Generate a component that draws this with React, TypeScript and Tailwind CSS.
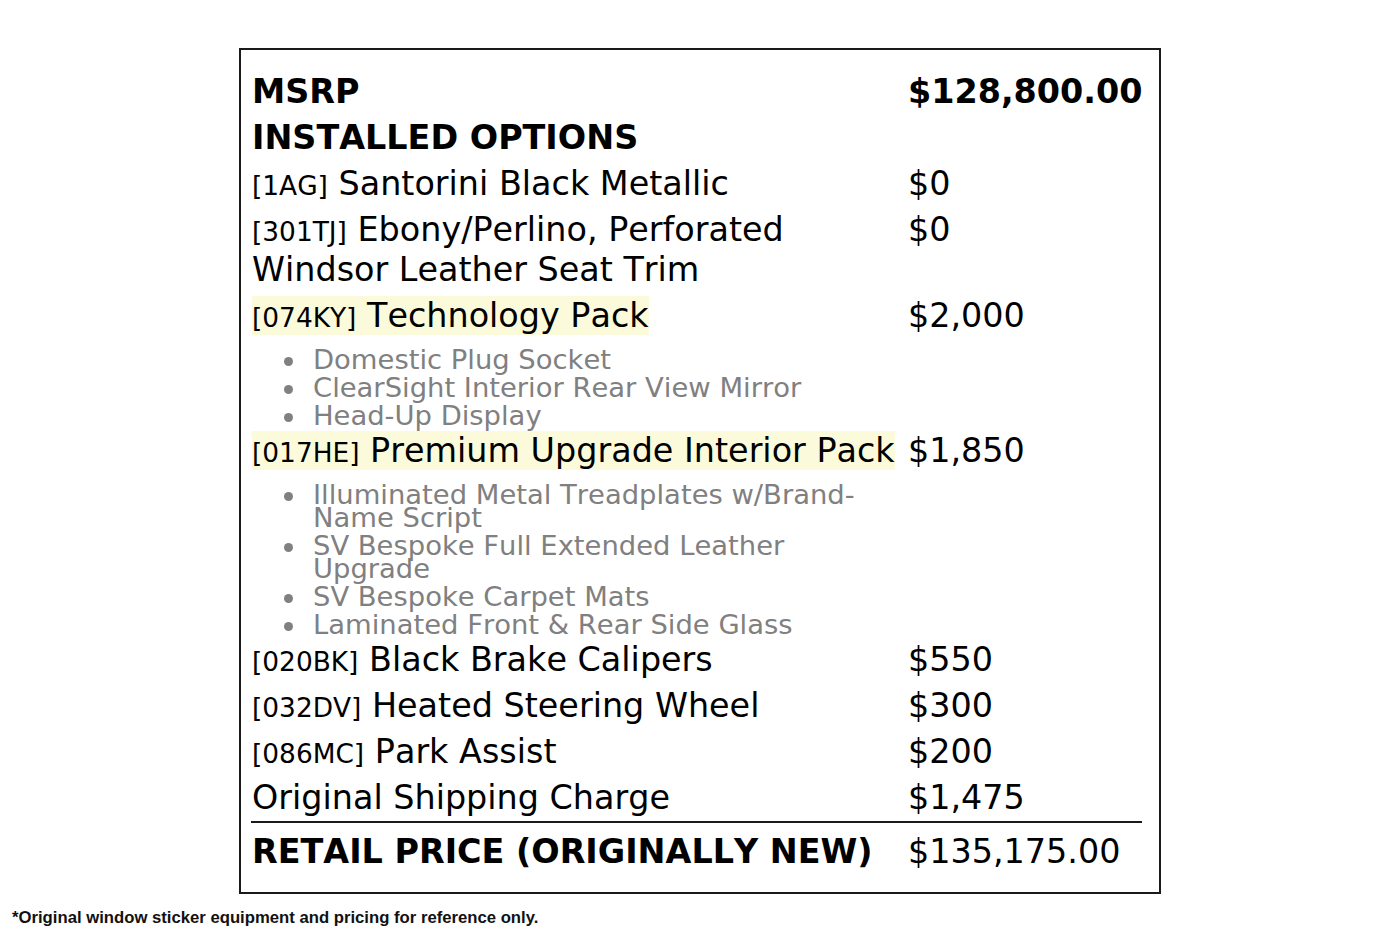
type Option = {
  code?: string;
  name: string;
  price: string;
  highlight?: boolean;
  items?: string[];
};

const options: Option[] = [
  { code: "[1AG]", name: "Santorini Black Metallic", price: "$0" },
  { code: "[301TJ]", name: "Ebony/Perlino, Perforated Windsor Leather Seat Trim", price: "$0" },
  {
    code: "[074KY]",
    name: "Technology Pack",
    price: "$2,000",
    highlight: true,
    items: ["Domestic Plug Socket", "ClearSight Interior Rear View Mirror", "Head-Up Display"],
  },
  {
    code: "[017HE]",
    name: "Premium Upgrade Interior Pack",
    price: "$1,850",
    highlight: true,
    items: [
      "Illuminated Metal Treadplates w/Brand-Name Script",
      "SV Bespoke Full Extended Leather Upgrade",
      "SV Bespoke Carpet Mats",
      "Laminated Front & Rear Side Glass",
    ],
  },
  { code: "[020BK]", name: "Black Brake Calipers", price: "$550" },
  { code: "[032DV]", name: "Heated Steering Wheel", price: "$300" },
  { code: "[086MC]", name: "Park Assist", price: "$200" },
  { name: "Original Shipping Charge", price: "$1,475" },
];

function Row({ left, right, className = "" }: { left: React.ReactNode; right?: React.ReactNode; className?: string }) {
  return (
    <div className={`grid grid-cols-[656px_1fr] leading-[40px] ${className}`}>
      <div className="pr-[4px]">{left}</div>
      <div>{right}</div>
    </div>
  );
}

function OptionLabel({ opt }: { opt: Option }) {
  const inner = (
    <>
      {opt.code && <span className="text-[26.4px] leading-none">{opt.code}</span>}
      {opt.code && " "}
      {opt.name}
    </>
  );
  if (opt.highlight) return <span className="bg-[#fbfbdc]">{inner}</span>;
  return inner;
}

export default function App() {
  return (
    <div className="min-h-screen bg-white pt-[48px]">
      {/* Sticker box */}
      <div className="mx-auto h-[846px] w-[922px] border-2 border-[#1a1a1a] pl-[11px] pr-[20px] pt-[22px] font-['DejaVu_Sans',sans-serif] text-[33.4px] text-black [font-kerning:none]">
        <Row className="font-bold" left="MSRP" right="$128,800.00" />
        <Row className="mt-[6px] font-bold" left="INSTALLED OPTIONS" />

        {options.map((opt) => (
          <div key={opt.name}>
            <Row className="mt-[6px]" left={<OptionLabel opt={opt} />} right={opt.price} />
            {opt.items && (
              <ul className="mb-[-2px] mt-[12px] w-[652px] text-[27.4px] leading-[23px] text-[#808080]">
                {opt.items.map((item, i) => (
                  <li key={item} className={`flex ${i > 0 ? "mt-[5px]" : ""}`}>
                    <span className="ml-[32px] mr-[20px] mt-[9px] h-[9px] w-[9px] shrink-0 rounded-full bg-[#808080]" />
                    <span>{item}</span>
                  </li>
                ))}
              </ul>
            )}
          </div>
        ))}

        <div className="-ml-[1px] -mr-[3px] mt-[3px] h-[2px] bg-[#1a1a1a]" />
        <Row className="mt-[9px]" left={<span className="font-bold">RETAIL PRICE (ORIGINALLY NEW)</span>} right="$135,175.00" />
      </div>

      <p className="mt-[14px] pl-[12px] font-['Liberation_Sans',Arial,sans-serif] text-[16.7px] font-bold leading-[20px] text-[#111]">
        *Original window sticker equipment and pricing for reference only.
      </p>
    </div>
  );
}
